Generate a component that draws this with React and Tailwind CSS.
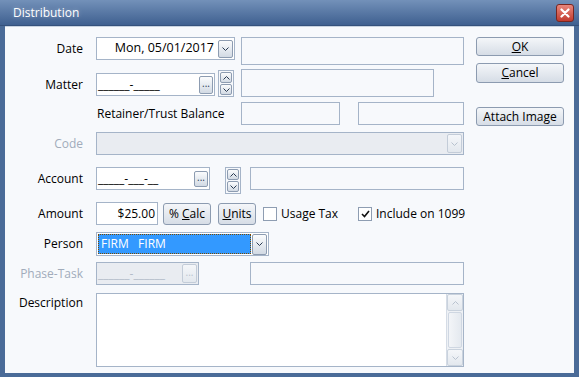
import React from "react";

const Chev = ({ up, disabled }) => (
  <svg width="7" height="4" viewBox="0 0 7 4">
    <polyline
      points={up ? "0.5,3.5 3.5,0.5 6.5,3.5" : "0.5,0.5 3.5,3.5 6.5,0.5"}
      fill="none"
      stroke={disabled ? "#b8c2cf" : "#2a3b52"}
      strokeWidth="1"
    />
  </svg>
);

const SmallBtn = ({ className = "", disabled, children }) => (
  <div
    className={`flex items-center justify-center rounded-[2px] border ${
      disabled
        ? "border-[#c3ccd8] bg-linear-to-b from-[#f4f6f9] to-[#e3e8ee]"
        : "border-[#8d9cb1] bg-linear-to-b from-[#fbfcfd] to-[#d2dae4]"
    } ${className}`}
  >
    {children}
  </div>
);

const Dots = ({ disabled }) => (
  <span className={`text-[10px] leading-none -mt-[3px] ${disabled ? "text-[#b8c2cf]" : "text-[#2a3b52]"}`}>...</span>
);

const Spinner = ({ className = "" }) => (
  <div className={`flex flex-col gap-[1px] border border-[#a5b4c8] p-[1px] w-[16px] h-[27px] ${className}`}>
    <SmallBtn className="flex-1">
      <Chev up />
    </SmallBtn>
    <SmallBtn className="flex-1">
      <Chev />
    </SmallBtn>
  </div>
);

const Label = ({ children, h = "h-[23px]", gray }) => (
  <div className={`w-[78px] ${h} flex items-center justify-end shrink-0 ${gray ? "text-[#a1acbb]" : "text-black"}`}>
    {children}
  </div>
);

const Box = ({ className = "", children }) => (
  <div className={`border border-[#a5b4c8] shrink-0 ${className}`}>{children}</div>
);

const Check = ({ checked }) => (
  <div className="w-[14px] h-[14px] border border-[#8e9db2] bg-white flex items-center justify-center shrink-0">
    {checked && (
      <svg width="9" height="8" viewBox="0 0 9 8">
        <polyline points="1,4 3.5,6.5 8,1" fill="none" stroke="#111" strokeWidth="1.6" />
      </svg>
    )}
  </div>
);

const WinBtn = ({ className = "", children }) => (
  <div
    className={`w-[88px] flex items-center justify-center rounded-[3px] border border-[#8c9bb0] bg-linear-to-b from-[#f4f6f9] to-[#d6dde6] text-black ${className}`}
  >
    {children}
  </div>
);

export default function App() {
  return (
    <div className="w-[579px] h-[377px] flex flex-col bg-[#4a6b98] font-['Open_Sans',sans-serif] text-[12px] overflow-hidden">
      <div className="h-[26px] shrink-0 flex items-center justify-between pl-[13px] pr-[5px] bg-linear-to-b from-[#7391b9] to-[#3f6090] border-b border-[#34517c]">
        <span className="text-white text-[12px] [text-shadow:0_0_4px_rgba(255,255,255,0.35)]">Distribution</span>
        <div className="w-[18px] h-[18px] mt-[1px] rounded-[3px] border border-[#7a2620] bg-linear-to-b from-[#e8867c] to-[#c13a2e] flex items-center justify-center">
          <svg width="10" height="10" viewBox="0 0 10 10">
            <path d="M1.5 1.5 L8.5 8.5 M8.5 1.5 L1.5 8.5" stroke="#fff" strokeWidth="2.2" strokeLinecap="round" />
          </svg>
        </div>
      </div>

      <div className="flex-1 mx-[5px] mb-[4px] bg-[#f7f9fc] flex border-t border-[#c7d2e0]">
        <div className="w-[464px] pt-[10px] flex flex-col">
          {/* Date */}
          <div className="flex h-[28px]">
            <Label>Date</Label>
            <Box className="ml-[13px] w-[139px] h-[23px] bg-white flex items-center justify-end pr-[1px]">
              <span className="text-[12.5px] mr-[4px]">Mon, 05/01/2017</span>
              <SmallBtn className="w-[15px] h-[18px]">
                <Chev />
              </SmallBtn>
            </Box>
            <Box className="ml-[6px] w-[223px] h-[28px]" />
          </div>

          {/* Matter */}
          <div className="flex h-[28px] mt-[4px]">
            <Label h="h-[23px] mt-[4px]">Matter</Label>
            <Box className="ml-[13px] mt-[4px] w-[119px] h-[23px] bg-white flex items-center justify-between pl-[1px] pr-[1px]">
              <span>______-_____</span>
              <SmallBtn className="w-[14px] h-[18px]">
                <Dots />
              </SmallBtn>
            </Box>
            <Spinner className="ml-[3px] mt-[1px]" />
            <Box className="ml-[7px] w-[193px] h-[28px]" />
          </div>

          {/* Retainer */}
          <div className="flex h-[23px] mt-[5px]">
            <div className="w-[236px] pl-[92px] flex items-center shrink-0">Retainer/Trust Balance</div>
            <Box className="w-[99px] h-[23px]" />
            <Box className="ml-[18px] w-[106px] h-[23px]" />
          </div>

          {/* Code */}
          <div className="flex h-[23px] mt-[7px]">
            <Label gray>Code</Label>
            <Box className="ml-[13px] w-[368px] h-[23px] bg-[#e9ecf1] flex items-center justify-end pr-[1px]">
              <SmallBtn disabled className="w-[15px] h-[19px]">
                <Chev disabled />
              </SmallBtn>
            </Box>
          </div>

          {/* Account */}
          <div className="flex h-[27px] mt-[12px]">
            <Label>Account</Label>
            <Box className="ml-[13px] w-[114px] h-[23px] bg-white flex items-center justify-between pl-[1px] pr-[1px]">
              <span>_____-___-__</span>
              <SmallBtn className="w-[14px] h-[16px]">
                <Dots />
              </SmallBtn>
            </Box>
            <Spinner className="ml-[15px]" />
            <Box className="ml-[9px] w-[214px] h-[23px]" />
          </div>

          {/* Amount */}
          <div className="flex h-[23px] mt-[8px] items-center">
            <Label>Amount</Label>
            <Box className="ml-[13px] w-[62px] h-[23px] bg-white flex items-center justify-end pr-[2px]">
              <span>$25.00</span>
            </Box>
            <WinBtn className="ml-[5px] !w-[48px] h-[22px]">
              <span>
                % <span className="underline">C</span>alc
              </span>
            </WinBtn>
            <WinBtn className="ml-[7px] !w-[38px] h-[22px]">
              <span>
                <span className="underline">U</span>nits
              </span>
            </WinBtn>
            <div className="ml-[7px]">
              <Check />
            </div>
            <span className="ml-[4px] w-[77px] shrink-0">Usage Tax</span>
            <Check checked />
            <span className="ml-[4px] whitespace-nowrap">Include on 1099</span>
          </div>

          {/* Person */}
          <div className="flex h-[24px] mt-[7px]">
            <Label h="h-[24px]">Person</Label>
            <Box className="ml-[13px] w-[173px] h-[24px] bg-white flex items-center p-[1px]">
              <div className="flex-1 h-[20px] bg-[#3399ff] border border-dotted border-[#7a4a00] text-white flex items-center pl-[2px] whitespace-pre">
                FIRM   FIRM
              </div>
              <SmallBtn className="ml-[1px] w-[15px] h-[21px]">
                <Chev />
              </SmallBtn>
            </Box>
          </div>

          {/* Phase-Task */}
          <div className="flex h-[23px] mt-[6px]">
            <Label gray>Phase-Task</Label>
            <Box className="ml-[13px] w-[103px] h-[23px] bg-[#e9ecf1] flex items-center justify-between pl-[1px] pr-[1px] text-[#b3bcc9]">
              <span>______-______</span>
              <SmallBtn disabled className="w-[15px] h-[19px]">
                <Dots disabled />
              </SmallBtn>
            </Box>
            <Box className="ml-[51px] w-[214px] h-[23px]" />
          </div>

          {/* Description */}
          <div className="flex h-[74px] mt-[8px]">
            <Label h="h-[20px]">Description</Label>
            <Box className="ml-[13px] w-[368px] h-[74px] bg-white flex justify-end">
              <div className="w-[17px] h-full flex flex-col bg-[#eef1f5] border-l border-[#d5dce6]">
                <SmallBtn disabled className="h-[17px] !border-[#c9d2dd]">
                  <Chev up disabled />
                </SmallBtn>
                <div className="flex-1 mx-[1px] my-[1px] border border-[#cfd7e2] bg-linear-to-r from-[#f3f5f8] to-[#e4e9ef] rounded-[2px]" />
                <SmallBtn disabled className="h-[17px] !border-[#c9d2dd]">
                  <Chev disabled />
                </SmallBtn>
              </div>
            </Box>
          </div>
        </div>

        <div className="ml-[7px] pt-[10px] flex flex-col">
          <WinBtn className="h-[19px]">
            <span>
              <span className="underline">O</span>K
            </span>
          </WinBtn>
          <WinBtn className="h-[20px] mt-[7px]">
            <span>
              <span className="underline">C</span>ancel
            </span>
          </WinBtn>
          <WinBtn className="h-[19px] mt-[24px]">Attach Image</WinBtn>
        </div>
      </div>
    </div>
  );
}
